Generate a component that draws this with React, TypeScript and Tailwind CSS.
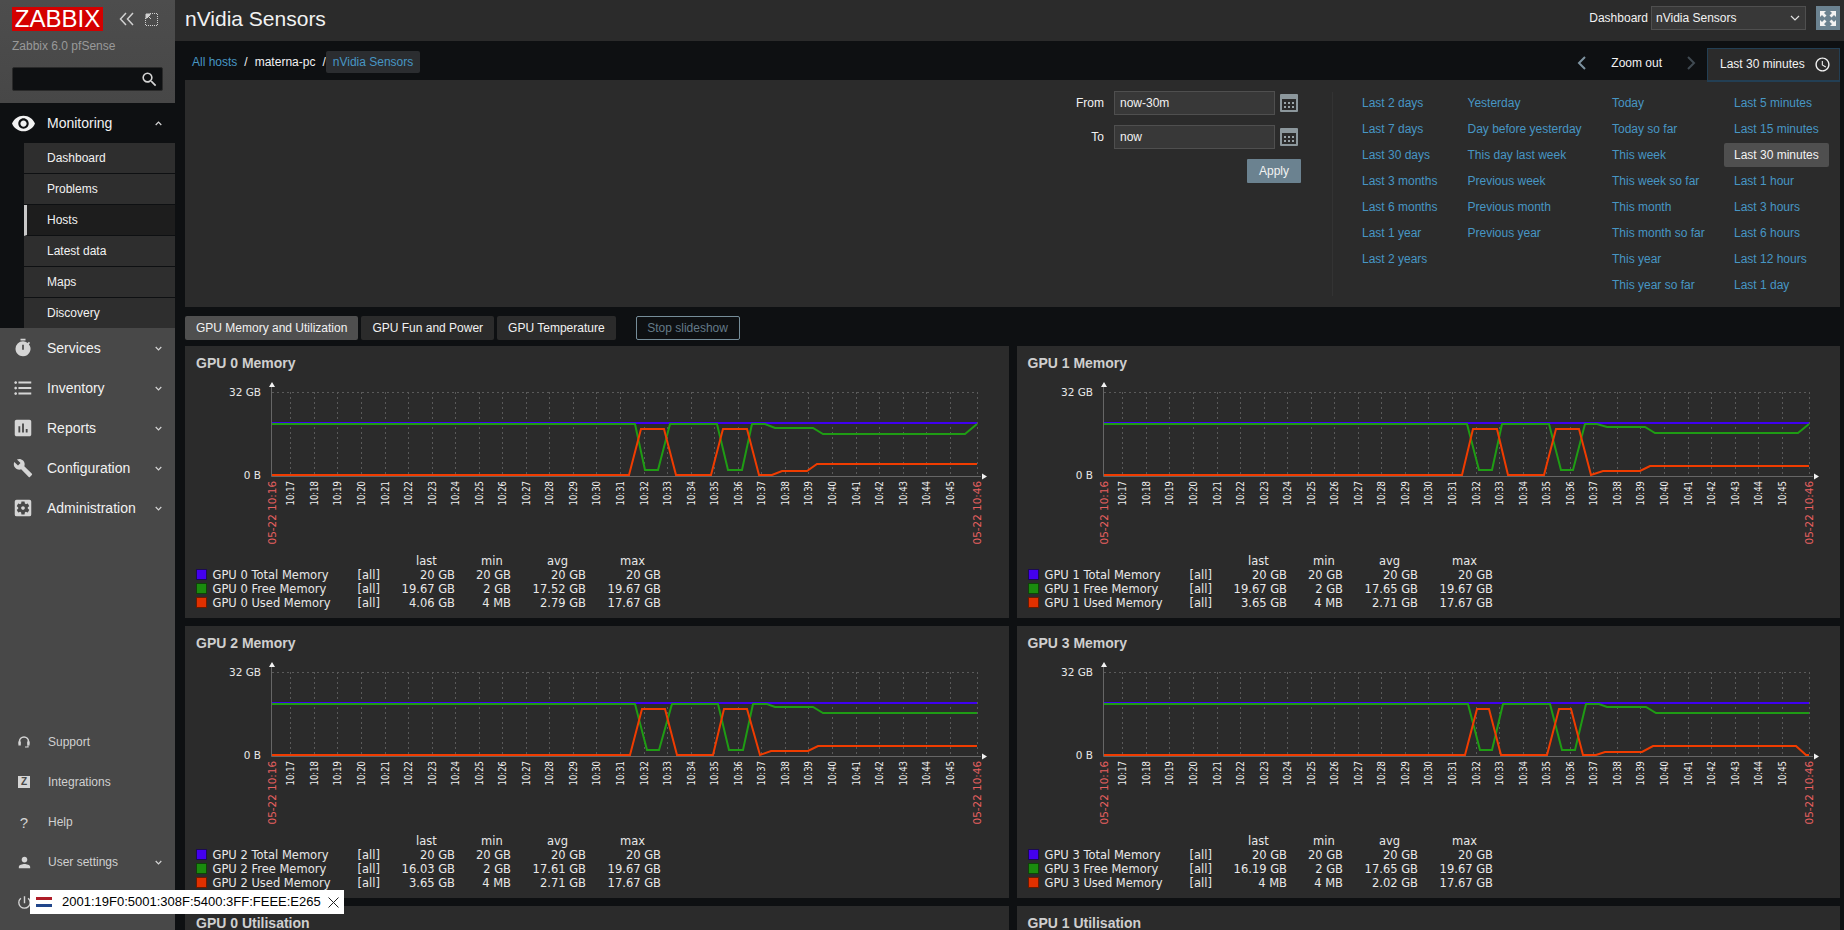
import type { ReactNode } from "react";
import {
  MdAccessTime,
  MdAssessment,
  MdBuild,
  MdFormatListBulleted,
  MdPerson,
  MdPowerSettingsNew,
  MdRemoveRedEye,
  MdSearch,
  MdSettingsApplications,
  MdTimer,
} from "react-icons/md";

type Point = [number, number];

type Gpu = {
  id: number;
  free: Point[];
  used: Point[];
  freeStats: string[];
  usedStats: string[];
};

// points are read off the reference, in the page coordinates of the first card
const gpus: Gpu[] = [
  {
    id: 0,
    free: [[272, 424], [635, 424], [645, 470], [658, 470], [670, 424], [717, 424], [728, 470], [742, 470], [752, 424], [765, 424], [775, 428], [813, 428], [823, 434], [965, 434], [977, 424]],
    used: [[272, 475], [629, 475], [641, 429], [664, 429], [676, 475], [711, 475], [723, 429], [747, 429], [759, 475], [772, 475], [782, 471], [807, 471], [817, 464], [977, 464]],
    freeStats: ["19.67 GB", "2 GB", "17.52 GB", "19.67 GB"],
    usedStats: ["4.06 GB", "4 MB", "2.79 GB", "17.67 GB"],
  },
  {
    id: 1,
    free: [[272, 424], [635, 424], [647, 470], [660, 470], [670, 424], [717, 424], [729, 470], [741, 470], [753, 424], [765, 424], [775, 427], [813, 427], [823, 433], [966, 433], [977, 424]],
    used: [[272, 475], [630, 475], [641, 429], [665, 429], [676, 475], [712, 475], [724, 429], [747, 429], [759, 475], [771, 471], [808, 471], [818, 466], [977, 466]],
    freeStats: ["19.67 GB", "2 GB", "17.65 GB", "19.67 GB"],
    usedStats: ["3.65 GB", "4 MB", "2.71 GB", "17.67 GB"],
  },
  {
    id: 2,
    free: [[272, 424], [635, 424], [647, 470], [659, 470], [672, 424], [718, 424], [729, 470], [743, 470], [753, 424], [767, 424], [775, 427], [813, 427], [823, 433], [977, 433]],
    used: [[272, 475], [630, 475], [642, 429], [665, 429], [677, 475], [713, 475], [724, 429], [747, 429], [760, 475], [771, 471], [808, 471], [818, 466], [977, 466]],
    freeStats: ["16.03 GB", "2 GB", "17.61 GB", "19.67 GB"],
    usedStats: ["3.65 GB", "4 MB", "2.71 GB", "17.67 GB"],
  },
  {
    id: 3,
    free: [[272, 424], [636, 424], [648, 470], [660, 470], [671, 424], [718, 424], [730, 470], [743, 470], [754, 424], [767, 424], [775, 427], [814, 427], [824, 433], [977, 433]],
    used: [[272, 475], [633, 475], [645, 429], [657, 429], [669, 475], [715, 475], [727, 429], [739, 429], [751, 475], [764, 475], [773, 472], [810, 472], [821, 466], [964, 466], [974, 475], [977, 475]],
    freeStats: ["16.19 GB", "2 GB", "17.65 GB", "19.67 GB"],
    usedStats: ["4 MB", "4 MB", "2.02 GB", "17.67 GB"],
  },
];

const ticks = Array.from({ length: 29 }, (_, i) => ({
  x: Math.round(290.3 + i * 23.55),
  label: `10:${17 + i}`,
}));

const presets = [
  { width: "w-[105.5px]", links: ["Last 2 days", "Last 7 days", "Last 30 days", "Last 3 months", "Last 6 months", "Last 1 year", "Last 2 years"] },
  { width: "w-[144.5px]", links: ["Yesterday", "Day before yesterday", "This day last week", "Previous week", "Previous month", "Previous year"] },
  { width: "w-[122px]", links: ["Today", "Today so far", "This week", "This week so far", "This month", "This month so far", "This year", "This year so far"] },
  { width: "w-[100px]", links: ["Last 5 minutes", "Last 15 minutes", "Last 30 minutes", "Last 1 hour", "Last 3 hours", "Last 6 hours", "Last 12 hours", "Last 1 day"] },
];

function Caret({ up = false }: { up?: boolean }) {
  return (
    <svg width="7" height="5" viewBox="0 0 7 5" className="ml-auto mr-[13px] shrink-0 fill-none stroke-[#d5d5d5]">
      <path d={up ? "M0.7 4 L3.5 1.2 L6.3 4" : "M0.7 1 L3.5 3.8 L6.3 1"} strokeWidth="1.2" />
    </svg>
  );
}

function MenuRow({ icon, label }: { icon: ReactNode; label: string }) {
  return (
    <div className="flex h-10 items-center text-[14px] text-[#f2f2f2]">
      <span className="flex w-[47px] justify-center pr-[1px] text-[#d5d5d5]">{icon}</span>
      {label}
      <Caret />
    </div>
  );
}

function FootRow({ icon, label, caret = false }: { icon: ReactNode; label: string; caret?: boolean }) {
  return (
    <div className="flex h-10 items-center text-[12px] text-[#d0d0d0]">
      <span className="flex w-[48px] justify-center text-[#d5d5d5]">{icon}</span>
      {label}
      {caret && <Caret />}
    </div>
  );
}

function Sidebar() {
  const items = ["Dashboard", "Problems", "Hosts", "Latest data", "Maps", "Discovery"];
  return (
    <aside className="flex h-full w-[175px] shrink-0 flex-col bg-[#484848]">
      <div className="h-[103px] bg-gradient-to-b from-[#4d4d4d] to-[#474747] pl-[12px] pt-[7px]">
        <div className="flex items-center">
          <div className="flex h-[24px] w-[91px] items-center justify-center bg-[#d40000] text-[24px] leading-none text-white">ZABBIX</div>
          <svg width="16" height="14" viewBox="0 0 16 14" className="ml-[16px] fill-none stroke-[#d0d0d0]">
            <path d="M7 1 L1.5 7 L7 13 M14 1 L8.5 7 L14 13" strokeWidth="1.5" />
          </svg>
          <svg width="13" height="13" viewBox="0 0 13 13" className="ml-[10px] fill-none stroke-[#d0d0d0]">
            <path d="M5 .5 H12.5 V12.5 H.5 V5" strokeDasharray="1 1" />
            <path d="M1 1 L6 6 M1 1 H5 V2 L2 5 H1 Z" fill="#d0d0d0" />
          </svg>
        </div>
        <div className="mt-[7px] text-[12px] leading-[16px] text-[#999999]">Zabbix 6.0 pfSense</div>
        <div className="mt-[13px] flex h-[24px] w-[151px] items-center justify-end rounded-[2px] border border-[#2a2a2a] bg-[#0e1012] pr-[3px] text-[#d5d5d5]">
          <MdSearch size={19} />
        </div>
      </div>
      <div className="bg-[#0e1012]">
        <div className="flex h-10 items-center text-[14px] text-[#f2f2f2]">
          <span className="flex w-[47px] justify-center text-[#f2f2f2]"><MdRemoveRedEye size={25} /></span>
          Monitoring
          <Caret up />
        </div>
        <div className="ml-[24px]">
          {items.map((item) => (
            <div
              key={item}
              className={
                item === "Hosts"
                  ? "flex h-[31px] items-center border-b border-[#0e1012] border-l-[3px] border-l-[#c8c8c8] bg-[#1d1d1d] pl-[20px] text-[12px] text-[#f2f2f2]"
                  : "flex h-[31px] items-center border-b border-[#0e1012] bg-[#2e2e2e] pl-[23px] text-[12px] text-[#f2f2f2] last:h-[30px] last:border-b-0"
              }
            >
              {item}
            </div>
          ))}
        </div>
      </div>
      <MenuRow icon={<MdTimer size={20} />} label="Services" />
      <MenuRow icon={<MdFormatListBulleted size={22} />} label="Inventory" />
      <MenuRow icon={<MdAssessment size={22} />} label="Reports" />
      <MenuRow icon={<MdBuild size={20} />} label="Configuration" />
      <MenuRow icon={<MdSettingsApplications size={22} />} label="Administration" />
      <div className="mt-auto pb-2">
        <FootRow
          label="Support"
          icon={
            <svg width="12" height="13" viewBox="0 0 12 13" className="fill-none stroke-[#d5d5d5]">
              <path d="M1.5 8 V5.5 A4.5 4.5 0 0 1 10.5 5.5 V8" strokeWidth="1.6" />
              <rect x="0.4" y="5.5" width="2.4" height="4" fill="#d5d5d5" stroke="none" />
              <rect x="9.2" y="5.5" width="2.4" height="4" fill="#d5d5d5" stroke="none" />
              <path d="M10 9.5 V11 H7" strokeWidth="1.2" />
            </svg>
          }
        />
        <FootRow label="Integrations" icon={<span className="flex h-[12px] w-[12px] items-center justify-center bg-[#d5d5d5] text-[10px] font-bold leading-none text-[#484848]">Z</span>} />
        <FootRow label="Help" icon={<span className="text-[15px] leading-none text-[#d5d5d5]">?</span>} />
        <FootRow label="User settings" caret icon={<MdPerson size={17} />} />
        <FootRow label="Sign out" icon={<MdPowerSettingsNew size={17} />} />
      </div>
    </aside>
  );
}

function CalendarIcon() {
  return (
    <svg width="18" height="18" viewBox="0 0 18 18" className="shrink-0">
      <rect width="18" height="18" rx="1" fill="#8c979c" />
      <rect x="2" y="5" width="14" height="11" fill="#2b2b2b" />
      <path d="M4 8h2v2H4zM8 8h2v2H8zM12 8h2v2h-2zM4 12h2v2H4zM8 12h2v2H8zM12 12h2v2h-2z" fill="#9aa4a9" />
    </svg>
  );
}

function FilterPanel() {
  return (
    <section className="flex h-[227px] bg-[#2b2b2b]">
      <div className="flex flex-1 flex-col items-end gap-[10px] pr-[31px] pt-[11px] text-[12px] text-[#f2f2f2]">
        {[
          ["From", "now-30m"],
          ["To", "now"],
        ].map(([label, value]) => (
          <div key={label} className="flex h-[24px] w-[229px] items-center pr-[3px]">
            <span className="w-[42px] pr-[10px] text-right">{label}</span>
            <div className="flex h-[24px] w-[161px] items-center border border-[#4f4f4f] bg-[#383838] pl-[5px]">{value}</div>
            <span className="ml-[5px]"><CalendarIcon /></span>
          </div>
        ))}
        <div className="flex h-[24px] w-[54px] items-center justify-center rounded-[1px] bg-[#6b8290]">Apply</div>
      </div>
      <div className="mt-[12px] flex h-[204px] w-[508px] border-l border-[#333333] pl-[29px]">
        {presets.map((col) => (
          <div key={col.links[0]} className={`${col.width} -mt-[2px] shrink-0`}>
            {col.links.map((link) => (
              <div key={link} className="flex h-[26px] items-center whitespace-nowrap text-[12px] text-[#4796c4]">
                {link === "Last 30 minutes" ? (
                  <span className="-ml-[10px] flex h-[24px] w-[105px] items-center rounded-[2px] bg-[#4f4f4f] pl-[10px] text-[#f2f2f2]">{link}</span>
                ) : (
                  link
                )}
              </div>
            ))}
          </div>
        ))}
      </div>
    </section>
  );
}

function Line({ points, color }: { points: Point[]; color: string }) {
  return <polyline points={points.map((p) => p.join(",")).join(" ")} fill="none" stroke={color} strokeWidth="2" />;
}

function StatText({ x, y, children, anchor = "end" }: { x: number; y: number; children: string; anchor?: "start" | "end" }) {
  return (
    <text x={x} y={y} textAnchor={anchor} className="fill-[#e8e8e8] text-[11.5px]">
      {children}
    </text>
  );
}

function LegendRow({ y, swatch, border, label, stats }: { y: number; swatch: string; border: string; label: string; stats: string[] }) {
  const columns = [455, 511, 586, 661];
  return (
    <g>
      <rect x="196.5" y={y - 9.5} width="10" height="10" fill={swatch} stroke={border} />
      <StatText x={212.5} y={y} anchor="start">{label}</StatText>
      <StatText x={357.5} y={y} anchor="start">[all]</StatText>
      {stats.map((value, i) => (
        <StatText key={i} x={columns[i]} y={y}>{value}</StatText>
      ))}
    </g>
  );
}

// viewBox starts at the first card's page position, so values above stay readable
function MemoryGraph({ gpu }: { gpu: Gpu }) {
  return (
    <svg width="824" height="238" viewBox="185 380 824 238" className="block font-['DejaVu_Sans',sans-serif]">
      <path d="M272 392.5 H977" stroke="#5a5a5a" strokeDasharray="2 3" fill="none" />
      {ticks.map((t) => (
        <path key={t.x} d={`M${t.x + 0.5} 392 V476`} stroke="#5a5a5a" strokeDasharray="2 3" fill="none" />
      ))}
      <path d="M977.5 392 V476" stroke="#5a5a5a" strokeDasharray="2 3" fill="none" />
      <path d="M271.5 386 V476.5 H981" stroke="#666666" fill="none" />
      <path d="M272 382 L275 387 H269 Z M987 476.5 L982 473.5 V479.5 Z" fill="#f2f2f2" />

      <text x="261" y="396" textAnchor="end" className="fill-[#e8e8e8] text-[10.5px]">32 GB</text>
      <text x="261" y="479" textAnchor="end" className="fill-[#e8e8e8] text-[10.5px]">0 B</text>

      <Line points={[[272, 423], [977, 423]]} color="#4000f0" />
      <Line points={gpu.free} color="#1f9c14" />
      <Line points={gpu.used} color="#f03c00" />

      {ticks.map((t) => (
        <text
          key={t.label}
          transform={`translate(${t.x + 3.5} 481) rotate(-90)`}
          textAnchor="end"
          textLength={24.5}
          lengthAdjust="spacingAndGlyphs"
          className="fill-[#f0f0f0] text-[10px]"
        >
          {t.label}
        </text>
      ))}
      <text transform="translate(275.5 481) rotate(-90)" textAnchor="end" className="fill-[#e86060] text-[10.4px]">05-22 10:16</text>
      <text transform="translate(980.7 481) rotate(-90)" textAnchor="end" className="fill-[#e86060] text-[10.4px]">05-22 10:46</text>

      <StatText x={416} y={565} anchor="start">last</StatText>
      <StatText x={481} y={565} anchor="start">min</StatText>
      <StatText x={547} y={565} anchor="start">avg</StatText>
      <StatText x={620} y={565} anchor="start">max</StatText>

      <LegendRow y={579} swatch="#4400ee" border="#1c0a55" label={`GPU ${gpu.id} Total Memory`} stats={["20 GB", "20 GB", "20 GB", "20 GB"]} />
      <LegendRow y={593} swatch="#1a8c0e" border="#0e4408" label={`GPU ${gpu.id} Free Memory`} stats={gpu.freeStats} />
      <LegendRow y={607} swatch="#e03000" border="#6a1a00" label={`GPU ${gpu.id} Used Memory`} stats={gpu.usedStats} />
    </svg>
  );
}

function CardTitle({ children }: { children: string }) {
  return <h4 className="flex h-[34px] items-center pl-[11px] text-[14px] font-bold text-[#cfcfcf]">{children}</h4>;
}

export default function App() {
  const tabs = ["GPU Memory and Utilization", "GPU Fun and Power", "GPU Temperature"];
  return (
    <div className="relative flex h-[930px] overflow-hidden bg-[#0e1012] font-['Liberation_Sans',Arial,sans-serif]">
      <Sidebar />
      <main className="min-w-0 flex-1">
        <header className="flex h-[41px] items-center bg-[#2b2b2b] pb-[5px] pl-[10px] pr-[4px] text-[#f2f2f2]">
          <h1 className="text-[21px] leading-none">nVidia Sensors</h1>
          <span className="ml-auto mr-[3px] text-[12px]">Dashboard</span>
          <div className="flex h-[24px] w-[155px] items-center justify-between border border-[#4f4f4f] bg-[#383838] pl-[4px] pr-[5px] text-[12px]">
            nVidia Sensors
            <svg width="10" height="6" viewBox="0 0 10 6" className="fill-none stroke-[#e0e0e0]">
              <path d="M1 1 L5 5 L9 1" strokeWidth="1.2" />
            </svg>
          </div>
          <button className="ml-[10px] flex h-[24px] w-[24px] items-center justify-center bg-[#6b8290]">
            <svg width="16" height="15" viewBox="0 0 16 15" fill="#f2f2f2">
              <path d="M0 0h6L4 2l2.5 2.5-2 2L2 4 0 6zM16 0h-6l2 2-2.500 2.500 2 2L14 4l2 2zM0 15h6l-2-2 2.500-2.500-2-2L2 11l-2-2zM16 15h-6l2-2-2.500-2.500 2-2L14 11l2-2z" />
            </svg>
          </button>
        </header>
        <div className="pl-[10px] pr-[4px]">
          <div className="flex h-[39px] items-center pt-[2px] text-[12px] text-[#f2f2f2]">
            <span className="ml-[7px] text-[#4796c4]">All hosts</span>
            <span className="ml-[7px] mr-[7px]">/</span>
            <span>materna-pc</span>
            <span className="ml-[7px]">/</span>
            <span className="flex h-[22px] items-center rounded-[2px] bg-[#2b2d30] px-[7px] text-[#4796c4]">nVidia Sensors</span>
            <svg width="10" height="14" viewBox="0 0 10 14" className="ml-auto mt-[2px] fill-none stroke-[#7d92a0]">
              <path d="M8 1 L2 7 L8 13" strokeWidth="2" />
            </svg>
            <span className="ml-[24px] mt-[2px]">Zoom out</span>
            <svg width="10" height="14" viewBox="0 0 10 14" className="ml-[24px] mt-[2px] fill-none stroke-[#404a52]">
              <path d="M2 1 L8 7 L2 13" strokeWidth="2" />
            </svg>
            <div className="relative z-10 ml-[11px] mt-[6px] flex h-[34px] w-[133px] items-center border border-b-2 border-[#233f54] bg-[#2b2b2b] pl-[12px] pr-[8px]">
              Last 30 minutes
              <MdAccessTime size={17} className="ml-auto" />
            </div>
          </div>
          <FilterPanel />
          <div className="mt-[9px] flex h-[24px] gap-[3px] text-[12px] text-[#f2f2f2]">
            {tabs.map((tab, i) => (
              <div key={tab} className={i === 0 ? "flex items-center rounded-[2px] bg-[#4f4f4f] px-[11px]" : "flex items-center rounded-[2px] bg-[#2b2b2b] px-[11px]"}>
                {tab}
              </div>
            ))}
            <div className="ml-[17px] flex w-[104px] items-center justify-center rounded-[2px] border border-[#768d99] text-[#647a88]">Stop slideshow</div>
          </div>
          <div className="mt-[6px] grid grid-cols-2 gap-2">
            {gpus.map((gpu) => (
              <article key={gpu.id} className="h-[272px] overflow-hidden bg-[#2b2b2b]">
                <CardTitle>{`GPU ${gpu.id} Memory`}</CardTitle>
                <MemoryGraph gpu={gpu} />
              </article>
            ))}
            <article className="h-[272px] bg-[#2b2b2b]">
              <CardTitle>GPU 0 Utilisation</CardTitle>
            </article>
            <article className="h-[272px] bg-[#2b2b2b]">
              <CardTitle>GPU 1 Utilisation</CardTitle>
            </article>
          </div>
        </div>
      </main>
      <div className="absolute left-[30px] top-[890px] flex h-[24px] w-[314px] items-center bg-white pl-[6px] text-[13px] text-black">
        <span className="flex h-[10px] w-[16px] shrink-0 flex-col">
          <span className="flex-1 bg-[#ae1c28]" />
          <span className="flex-1 bg-white" />
          <span className="flex-1 bg-[#21468b]" />
        </span>
        <span className="ml-[10px] whitespace-nowrap">2001:19F0:5001:308F:5400:3FF:FEEE:E265</span>
        <svg width="11" height="11" viewBox="0 0 11 11" className="ml-auto mr-[5px] shrink-0 fill-none stroke-[#222222]">
          <path d="M.5 .5 L10.5 10.500 M10.5 .5 L.5 10.500" />
        </svg>
      </div>
    </div>
  );
}
